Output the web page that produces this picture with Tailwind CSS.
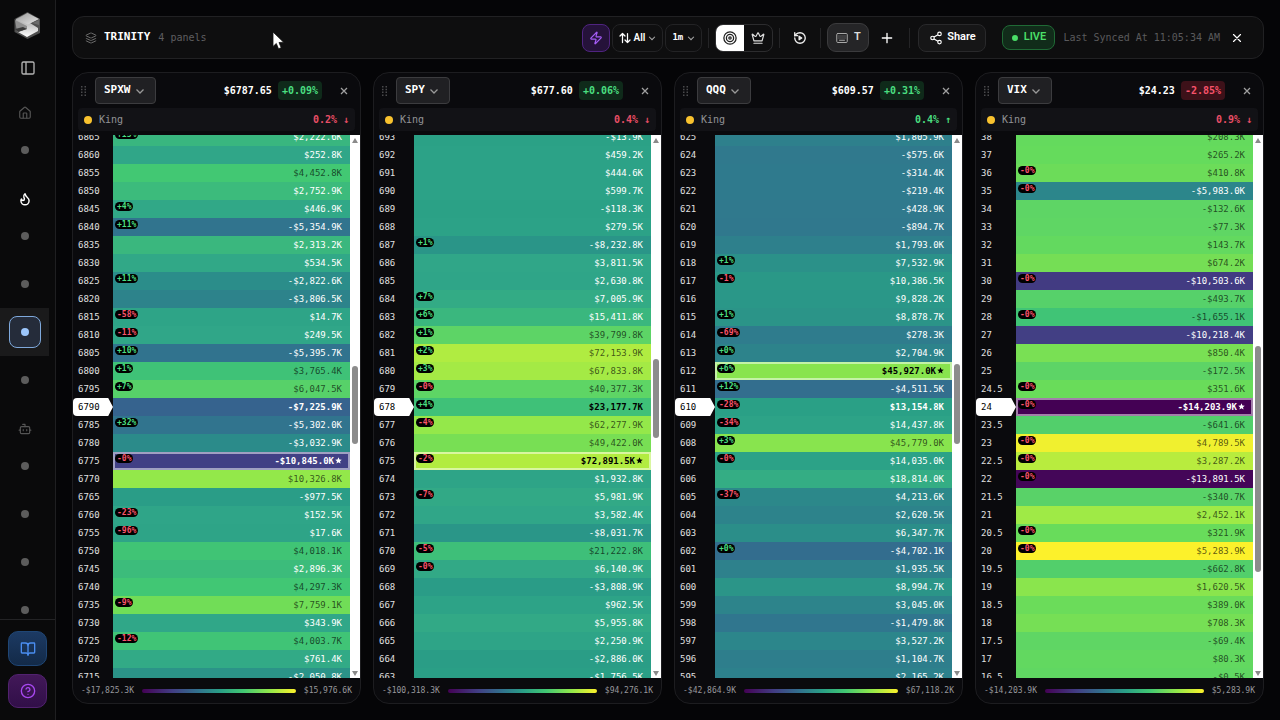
<!DOCTYPE html>
<html lang="en">
<head>
<meta charset="utf-8">
<meta name="viewport" content="width=device-width, initial-scale=1">
<title>Trinity</title>
<script src="https://cdn.jsdelivr.net/npm/@tailwindcss/browser@4"></script>
</head>
<body class="bg-[#050507] text-white font-['DejaVu_Sans_Mono','Liberation_Mono',monospace]">
<svg class="hidden" aria-hidden="true">
  <symbol id="chevron" viewBox="0 0 24 24"><path d="m5 9 7 7 7-7"/></symbol>
  <symbol id="close" viewBox="0 0 24 24"><path d="M18 6 6 18M6 6l12 12"/></symbol>
</svg>
<div class="flex h-screen overflow-hidden">

  <!-- Sidebar -->
  <aside class="flex w-14 shrink-0 flex-col border-r border-[#1f1f21] bg-[#0a0a0b]">
    <a href="#" aria-label="Home page" class="mt-2.5 flex h-8 items-center justify-center">
      <svg class="size-8" viewBox="0 0 32 32">
        <defs>
          <linearGradient id="lg1" x1="0" y1="0" x2="1" y2="1"><stop offset="0" stop-color="#9a9a9a"/><stop offset="1" stop-color="#e4e4e4"/></linearGradient>
          <linearGradient id="lg2" x1="0" y1="0" x2="0" y2="1"><stop offset="0" stop-color="#888"/><stop offset="1" stop-color="#fff"/></linearGradient>
        </defs>
        <path d="M15.500 2 28 9v14l-12.500 6L2.500 22V9z" fill="#4e4e4e"/>
        <path d="M15.500 3 26 9l-8 4 8 5v3l-11 6-9-5 9-3.500L4 13V9z" fill="url(#lg2)"/>
        <path d="M15.500 3 27 9l-11 5.500L4 10z" fill="url(#lg1)"/>
        <path d="M27 10v5l-7-2z" fill="#6a6a6a"/>
        <path d="M3 10l12 6v3L5 22z" fill="#8f8f8f"/>
        <path d="M3 19l8-2 4 2-9 3z" fill="#3a3a3a"/>
      </svg>
    </a>
    <button aria-label="Toggle sidebar" class="mt-4 flex h-5 items-center justify-center text-[#b4b4b4]">
      <svg class="size-4" viewBox="0 0 24 24" fill="none" stroke="currentColor" stroke-width="2"><rect x="3" y="3" width="18" height="18" rx="2"/><path d="M9 3v18"/></svg>
    </button>
    <nav class="mt-[22px] flex w-[49px] min-h-0 flex-1 flex-col overflow-hidden" aria-label="Main">
      <div class="flex h-[26px] shrink-0 items-center justify-center text-[#555]">
        <svg class="size-3.5" viewBox="0 0 24 24" fill="none" stroke="currentColor" stroke-width="2" stroke-linejoin="round"><path d="M15 21v-8a1 1 0 0 0-1-1h-4a1 1 0 0 0-1 1v8"/><path d="M3 10a2 2 0 0 1 .7-1.5l7-6a2 2 0 0 1 2.6 0l7 6A2 2 0 0 1 21 10v9a2 2 0 0 1-2 2H5a2 2 0 0 1-2-2z"/></svg>
      </div>
      <a href="#" aria-label="Overview" class="flex h-12 shrink-0 items-center justify-center"><span class="size-2 rounded-full bg-[#5c5c5c]"></span></a>
      <div class="mt-3 flex h-[26px] shrink-0 items-center justify-center text-white">
        <svg class="size-3.5" viewBox="0 0 24 24" fill="none" stroke="currentColor" stroke-width="2.5" stroke-linejoin="round" stroke-linecap="round"><path d="M8.5 14.5A2.5 2.5 0 0 0 11 12c0-1.38-.5-2-1-3-1.07-2.14-.22-4.05 2-6 .5 2.5 2 4.9 4 6.5s3 3.5 3 5.5a7 7 0 1 1-14 0c0-1.15.43-2.29 1-3a2.5 2.5 0 0 0 2.5 2.5z"/></svg>
      </div>
      <a href="#" aria-label="Heatmap" class="flex h-12 shrink-0 items-center justify-center"><span class="size-2 rounded-full bg-[#5c5c5c]"></span></a>
      <a href="#" aria-label="Charts" class="flex h-12 shrink-0 items-center justify-center"><span class="size-2 rounded-full bg-[#5c5c5c]"></span></a>
      <a href="#" aria-label="Trinity" aria-current="page" class="flex h-12 shrink-0 items-center justify-center bg-[#1a1a1b]"><span class="flex size-8 items-center justify-center rounded-lg border border-[#7fa9dc] bg-[#252c3a]"><span class="size-2 rounded-full bg-[#9cc6fb]"></span></span></a>
      <a href="#" aria-label="Replay" class="flex h-12 shrink-0 items-center justify-center"><span class="size-2 rounded-full bg-[#5c5c5c]"></span></a>
      <div class="mt-3 flex h-[26px] shrink-0 items-center justify-center text-[#555]">
        <svg class="size-3.5" viewBox="0 0 24 24" fill="none" stroke="currentColor" stroke-width="2" stroke-linejoin="round" stroke-linecap="round"><path d="M12 8V4H8"/><rect width="16" height="12" x="4" y="8" rx="2"/><path d="M2 14h2M20 14h2M15 13v2M9 13v2"/></svg>
      </div>
      <a href="#" aria-label="Assistant" class="flex h-12 shrink-0 items-center justify-center"><span class="size-2 rounded-full bg-[#5c5c5c]"></span></a>
      <a href="#" aria-label="Alerts" class="flex h-12 shrink-0 items-center justify-center"><span class="size-2 rounded-full bg-[#5c5c5c]"></span></a>
      <a href="#" aria-label="Signals" class="flex h-12 shrink-0 items-center justify-center"><span class="size-2 rounded-full bg-[#5c5c5c]"></span></a>
      <a href="#" aria-label="Settings" class="flex h-12 shrink-0 items-center justify-center"><span class="size-2 rounded-full bg-[#5c5c5c]"></span></a>
    </nav>
    <div class="flex flex-col gap-2 border-t border-[#232325] px-2 pt-[11px] pb-3">
      <button aria-label="Docs" class="flex h-[35px] items-center justify-center rounded-[10px] border border-[#1f4675] bg-linear-to-b from-[#1c3a63] to-[#132a48] text-[#4a8df0]">
        <svg class="size-4" viewBox="0 0 24 24" fill="none" stroke="currentColor" stroke-width="2" stroke-linejoin="round" stroke-linecap="round"><path d="M12 7v14"/><path d="M3 18a1 1 0 0 1-1-1V4a1 1 0 0 1 1-1h5a4 4 0 0 1 4 4 4 4 0 0 1 4-4h5a1 1 0 0 1 1 1v13a1 1 0 0 1-1 1h-6a3 3 0 0 0-3 3 3 3 0 0 0-3-3z"/></svg>
      </button>
      <button aria-label="Help" class="flex h-[34px] items-center justify-center rounded-[10px] border border-[#51226f] bg-linear-to-b from-[#421858] to-[#310f48] text-[#a848f0]">
        <svg class="size-4" viewBox="0 0 24 24" fill="none" stroke="currentColor" stroke-width="2" stroke-linejoin="round" stroke-linecap="round"><circle cx="12" cy="12" r="10"/><path d="M9.09 9a3 3 0 0 1 5.83 1c0 2-3 3-3 3M12 17h.01"/></svg>
      </button>
    </div>
  </aside>

  <main class="flex min-w-0 flex-1 flex-col gap-[13px] px-4 pt-4 pb-4">
    <!-- Toolbar -->
    <header class="flex h-[43px] shrink-0 items-center rounded-xl border border-[#212123] bg-[#0e0e0f] pl-3 pr-[19px]">
      <svg class="size-3 text-[#6b6b6b]" viewBox="0 0 24 24" fill="none" stroke="currentColor" stroke-width="2" stroke-linejoin="round"><path d="M12.83 2.18a2 2 0 0 0-1.66 0L2.6 6.08a1 1 0 0 0 0 1.83l8.58 3.91a2 2 0 0 0 1.66 0l8.58-3.9a1 1 0 0 0 0-1.83z"/><path d="M2 12a1 1 0 0 0 .58.91l8.6 3.91a2 2 0 0 0 1.65 0l8.58-3.9A1 1 0 0 0 22 12"/><path d="M2 17a1 1 0 0 0 .58.91l8.6 3.91a2 2 0 0 0 1.65 0l8.58-3.9A1 1 0 0 0 22 17"/></svg>
      <h1 class="ml-[7px] text-[11px] font-bold">TRINITY</h1>
      <span class="ml-2 text-[10px] text-[#5e5e60]">4 panels</span>
      <div class="ml-auto flex items-center">
        <button aria-label="Live flow" class="flex size-7 items-center justify-center rounded-lg border border-[#4f2480] bg-[#25123a] text-[#a45cf5]">
          <svg class="size-3.5" viewBox="0 0 24 24" fill="none" stroke="currentColor" stroke-width="2" stroke-linejoin="round" stroke-linecap="round"><path d="M4 14a1 1 0 0 1-.78-1.63l9.9-10.2a.5.5 0 0 1 .86.46l-1.92 6.02A1 1 0 0 0 13 10h7a1 1 0 0 1 .78 1.63l-9.9 10.2a.5.5 0 0 1-.86-.46l1.92-6.02A1 1 0 0 0 11 14z"/></svg>
        </button>
        <label class="relative ml-0.5 flex h-7 w-[51px] items-center rounded-lg border border-[#232325] bg-[#0f0f10] pl-1.5">
          <svg class="size-3 shrink-0" viewBox="0 0 24 24" fill="none" stroke="currentColor" stroke-width="2.5" stroke-linejoin="round" stroke-linecap="round"><path d="m2 8 5-5 5 5M7 3v18M22 16l-5 5-5-5M17 21V3"/></svg>
          <select aria-label="Sort" class="h-6 w-full appearance-none bg-transparent pl-0.5 font-['Roboto',sans-serif] text-[10px] font-semibold"><option>All</option></select>
          <svg class="pointer-events-none absolute right-[5px] size-2.5 text-[#aaa]" fill="none" stroke="currentColor" stroke-width="2.5"><use href="#chevron"/></svg>
        </label>
        <label class="relative ml-0.5 flex h-7 w-[37px] items-center rounded-lg border border-[#232325] bg-[#0f0f10]">
          <select aria-label="Interval" class="h-6 w-full appearance-none bg-transparent pl-1.5 text-[9px] font-bold"><option>1m</option></select>
          <svg class="pointer-events-none absolute right-[5px] size-2.5 text-[#aaa]" fill="none" stroke="currentColor" stroke-width="2.5"><use href="#chevron"/></svg>
        </label>
        <span class="ml-1.5 h-5 w-px bg-[#242426]"></span>
        <div class="ml-1.5 flex h-7 overflow-hidden rounded-lg border border-[#2c2c2e]">
          <button aria-label="Target mode" aria-pressed="true" class="flex w-7 items-center justify-center bg-white text-[#222]">
            <svg class="size-3.5" viewBox="0 0 24 24" fill="none" stroke="currentColor" stroke-width="2.2"><circle cx="12" cy="12" r="10.5"/><circle cx="12" cy="12" r="6.2"/><circle cx="12" cy="12" r="2"/></svg>
          </button>
          <button aria-label="King mode" aria-pressed="false" class="flex w-7 items-center justify-center text-[#ddd]">
            <svg class="size-3.5" viewBox="0 0 24 24" fill="none" stroke="currentColor" stroke-width="2" stroke-linejoin="round" stroke-linecap="round"><path d="M11.562 3.266a.5.5 0 0 1 .876 0L15.39 8.87a1 1 0 0 0 1.516.294L21.183 5.5a.5.5 0 0 1 .798.519l-2.834 10.246a1 1 0 0 1-.956.734H5.81a1 1 0 0 1-.957-.734L2.02 6.02a.5.5 0 0 1 .798-.519l4.276 3.664a1 1 0 0 0 1.516-.294zM5 21h14"/></svg>
          </button>
        </div>
        <span class="ml-1.5 h-5 w-px bg-[#242426]"></span>
        <button aria-label="Replay session" class="ml-1.5 flex size-7 items-center justify-center text-[#eee]">
          <svg class="size-3.5" viewBox="0 0 24 24" fill="none" stroke="currentColor" stroke-width="2.3" stroke-linejoin="round" stroke-linecap="round"><path d="M3 12a9 9 0 1 0 9-9 9.75 9.75 0 0 0-6.74 2.74L3 8"/><path d="M3 3v5h5"/><path d="M10.5 9v6l4.500-3z" fill="currentColor"/></svg>
        </button>
        <span class="ml-1.5 h-5 w-px bg-[#242426]"></span>
        <button class="ml-1.5 flex h-[29px] w-[42px] items-center justify-center gap-1.5 rounded-[9px] border border-[#3b3b3d] bg-[#252527] font-['Roboto',sans-serif] text-[11px] font-semibold text-[#ddd]">
          <svg class="size-3 text-[#a8a8a8]" viewBox="0 0 24 24" fill="none" stroke="currentColor" stroke-width="2" stroke-linecap="round"><rect x="1.500" y="3" width="21" height="18" rx="2"/><path d="M6 8h.01M10 8h.01M14 8h.01M18 8h.01M6 12h.01M10 12h.01M14 12h.01M18 12h.01M7 16.500h10"/></svg>
          T
        </button>
        <button aria-label="Add panel" class="ml-1 flex size-7 items-center justify-center">
          <svg class="size-3.5" viewBox="0 0 24 24" fill="none" stroke="currentColor" stroke-width="2.3" stroke-linecap="round"><path d="M4 12h16M12 4v16"/></svg>
        </button>
        <span class="ml-2 h-5 w-px bg-[#242426]"></span>
        <button class="ml-2 flex h-7 w-[68px] items-center justify-center gap-1 rounded-lg border border-[#29292b] bg-[#161617] font-['Roboto',sans-serif] text-[11px] font-semibold">
          <svg class="size-3.5" viewBox="0 0 24 24" fill="none" stroke="currentColor" stroke-width="2"><circle cx="18" cy="5" r="3"/><circle cx="6" cy="12" r="3"/><circle cx="18" cy="19" r="3"/><path d="m8.590 13.510 6.830 3.980M15.410 6.510l-6.820 3.980"/></svg>
          Share
        </button>
        <span class="ml-4 flex h-[25px] w-[53px] items-center justify-center gap-1.5 rounded-lg border border-[#1f6a35] bg-[#112c1a] font-['Roboto',sans-serif] text-[11px] font-semibold text-[#4ade68]"><span class="size-1.5 rounded-full bg-[#4ade68]"></span>LIVE</span>
        <span class="ml-2 text-[10px] text-[#5a5a5c]">Last Synced At 11:05:34 AM</span>
        <button aria-label="Close" class="ml-2.5 flex size-3.5 items-center justify-center">
          <svg class="size-3.5" fill="none" stroke="currentColor" stroke-width="2" stroke-linecap="round"><use href="#close"/></svg>
        </button>
      </div>
    </header>

    <!-- Panels, filled from the data below -->
    <div id="panels" class="grid min-h-0 flex-1 grid-cols-4 gap-3"></div>
  </main>
</div>

<svg class="pointer-events-none absolute top-[31px] left-[272px] h-[19px] w-[13px]" viewBox="0 0 13 19" aria-hidden="true"><path d="M1 1v14.500l3.300-3 2.200 5.300 2.700-1.100-2.200-5.200 4.600-.3z" fill="#fff" stroke="#111" stroke-width=".8"/></svg>

<script>
// Each row: strike|value in thousands|change in percent
const panels = [
  {sym:'SPXW', price:'$6787.65', chg:'+0.09%', king:'0.2%', up:false, spot:'6790', star:'6775', min:-17825.3, max:15976.6, thumb:[230,78],
   rows:'6865|2222.6|+15 6860|252.8 6855|4452.8 6850|2752.9 6845|446.9|+4 6840|-5354.9|+11 6835|2313.2 6830|534.5 6825|-2822.6|+11 6820|-3806.5 6815|14.7|-58 6810|249.5|-11 6805|-5395.7|+10 6800|3765.4|+1 6795|6047.5|+7 6790|-7225.9 6785|-5302.0|+32 6780|-3032.9 6775|-10845.0|-0 6770|10326.8 6765|-977.5 6760|152.5|-23 6755|17.6|-96 6750|4018.1 6745|2896.3 6740|4297.3 6735|7759.1|-9 6730|343.9 6725|4003.7|-12 6720|761.4 6715|-2050.8'},
  {sym:'SPY', price:'$677.60', chg:'+0.06%', king:'0.4%', up:false, spot:'678', star:'675', min:-100318.3, max:94276.1, thumb:[223,79],
   rows:'693|-13.9 692|459.2 691|444.6 690|599.7 689|-118.3 688|279.5 687|-8232.8|+1 686|3811.5 685|2630.8 684|7005.9|+7 683|15411.8|+6 682|39799.8|+1 681|72153.9|+2 680|67833.8|+3 679|40377.3|-0 678|23177.7|+4 677|62277.9|-4 676|49422.0 675|72891.5|-2 674|1932.8 673|5981.9|-7 672|3582.4 671|-8031.7 670|21222.8|-5 669|6140.9|-0 668|-3808.9 667|962.5 666|5955.8 665|2250.9 664|-2886.0 663|-1756.5'},
  {sym:'QQQ', price:'$609.57', chg:'+0.31%', king:'0.4%', up:true, spot:'610', star:'612', min:-42864.9, max:67118.2, thumb:[228,80],
   rows:'625|1805.9 624|-575.6 623|-314.4 622|-219.4 621|-428.9 620|-894.7 619|1793.0 618|7532.9|+1 617|10386.5|-1 616|9828.2 615|8878.7|+1 614|278.3|-69 613|2704.9|+0 612|45927.0|+6 611|-4511.5|+12 610|13154.8|-28 609|14437.8|-34 608|45779.0|+3 607|14035.0|-0 606|18814.0 605|4213.6|-37 604|2620.5 603|6347.7 602|-4702.1|+0 601|1935.5 600|8994.7 599|3045.0 598|-1479.8 597|3527.2 596|1104.7 595|2165.2'},
  {sym:'VIX', price:'$24.23', chg:'-2.85%', king:'0.9%', up:false, spot:'24', star:'24', min:-14203.9, max:5283.9, thumb:[210,226],
   rows:'38|208.3 37|265.2 36|410.8|-0 35|-5983.0|-0 34|-132.6 33|-77.3 32|143.7 31|674.2 30|-10503.6|-0 29|-493.7 28|-1655.1|-0 27|-10218.4 26|850.4 25|-172.5 24.5|351.6|-0 24|-14203.9|-0 23.5|-641.6 23|4789.5|-0 22.5|3287.2|-0 22|-13891.5|-0 21.5|-340.7 21|2452.1 20.5|321.9|-0 20|5283.9|-0 19.5|-662.8 19|1620.5 18.5|389.0 18|708.3 17.5|-69.4 17|80.3 16.5|-0.5'}
];
// Colour scale: position 0..1 and RGB
const stops = [[0,68,1,84],[.2,66,62,132],[.31,54,98,142],[.37,49,116,142],[.435,43,138,138],[.51,42,160,134],[.535,48,166,136],[.61,60,187,124],[.66,66,200,115],[.72,93,212,102],[.742,101,219,92],[.76,116,222,86],[.833,147,232,74],[.89,178,236,64],[.97,238,240,48],[1,252,241,43]];
const colour = t => {
  let i = 1;
  while (i < stops.length - 1 && t > stops[i][0]) i++;
  const a = stops[i-1], b = stops[i], k = (t - a[0]) / (b[0] - a[0]);
  return 'rgb(' + [1,2,3].map(n => Math.round(a[n] + (b[n] - a[n]) * k)).join(',') + ')';
};
const money = v => (v < 0 ? '-$' : '$') + Math.abs(v).toLocaleString('en-US', {minimumFractionDigits:1, maximumFractionDigits:1}) + 'K';

document.getElementById('panels').innerHTML = panels.map(p => {
  const rows = p.rows.split(' ').map(r => {
    const [strike, raw, pct] = r.split('|');
    const v = +raw, t = (v - p.min) / (p.max - p.min);
    const spot = strike === p.spot, star = strike === p.star, strong = spot || star;
    const tone = t > .62 ? (strong ? 'text-black' : 'text-black/65') : 'text-white';
    const weight = strong ? 'font-bold' : 'font-normal';
    const label = spot
      ? `<span class="flex h-[18px] items-center rounded-l bg-white pl-[5px] text-black [clip-path:polygon(0_0,88%_0,100%_50%,88%_100%,0_100%)]">${strike}</span>`
      : `<span class="block pl-[5px] text-[#e0e0e0]">${strike}</span>`;
    const badge = pct ? `<span class="absolute top-0.5 left-0.5 flex h-[9px] items-center rounded-full bg-black px-0.5 text-[8px] font-bold ${pct[0] === '+' ? 'text-[#4ade80]' : 'text-[#f8536b]'}">${pct}%</span>` : '';
    const ring = star ? '<span class="absolute inset-0 border-2 border-white/50"></span>' : '';
    return `<tr class="h-[18px]"><th scope="row" class="w-10 p-0 text-left text-[9px] leading-none font-medium">${label}</th><td class="relative p-0 pr-2 text-right text-[9px] leading-none ${weight} ${tone}" style="background:${colour(t)}">${ring}${badge}${money(v)}${star ? '<svg class="ml-px inline size-[7px] align-baseline" viewBox="0 0 24 24" fill="currentColor"><path d="M12 1l3.300 7.300 7.900.8-6 5.300 1.800 7.800L12 18.200l-7 4 1.800-7.800-6-5.300 7.900-.8z"/></svg>' : ''}</td></tr>`;
  }).join('');
  const down = p.chg[0] === '-';
  return `<section aria-label="${p.sym}" class="flex min-w-0 flex-col overflow-hidden rounded-2xl border border-[#1d1d20] bg-[#0a0a0d]">
    <div class="flex h-[35px] shrink-0 items-center pl-2 pr-2.5">
      <svg class="h-2.5 w-1.5 text-[#4a4a4d]" viewBox="0 0 6 10" fill="currentColor"><path d="M0 0h1.500v1.500H0zM3.500 0H5v1.500H3.500zM0 2.800h1.500v1.500H0zM3.500 2.800H5v1.500H3.500zM0 5.600h1.500v1.500H0zM3.500 5.600H5v1.500H3.500zM0 8.400h1.500v1.500H0zM3.500 8.400H5v1.500H3.500z"/></svg>
      <label class="relative ml-2 flex items-center">
        <select aria-label="Symbol" class="h-[27px] appearance-none rounded border border-[#3c3c3f] bg-[#202023] pl-2 pr-6 text-[11px] font-bold"><option>${p.sym}</option></select>
        <svg class="pointer-events-none absolute right-2.5 size-3 text-[#999]" fill="none" stroke="currentColor" stroke-width="2.5"><use href="#chevron"/></svg>
      </label>
      <span class="ml-auto text-[10px] font-bold">${p.price}</span>
      <span class="ml-1.5 flex h-[19px] items-center rounded px-1 text-[10px] font-bold ${down ? 'bg-[#3d1119] text-[#f8536b]' : 'bg-[#0f2a1a] text-[#4ade80]'}">${p.chg}</span>
      <button aria-label="Remove ${p.sym}" class="ml-4 flex size-3 items-center justify-center text-[#a0a0a0]"><svg class="size-3" fill="none" stroke="currentColor" stroke-width="2.5"><use href="#close"/></svg></button>
    </div>
    <div class="mx-[5px] mb-1 flex h-[23px] shrink-0 items-center rounded bg-[#121216] px-1.5 text-[10px]">
      <span class="size-2 rounded-full bg-[#f9c22e]"></span>
      <span class="ml-[7px] text-[#929296]">King</span>
      <span class="ml-auto font-bold ${p.up ? 'text-[#4ade80]' : 'text-[#e84e66]'}">${p.king} ${p.up ? '↑' : '↓'}</span>
    </div>
    <div class="flex min-h-0 flex-1">
      <div class="min-w-0 flex-1 overflow-hidden">
        <table class="-mt-[7px] w-full table-fixed border-collapse"><colgroup><col class="w-10"><col></colgroup><tbody>${rows}</tbody></table>
      </div>
      <div class="relative w-2.5 shrink-0 bg-white" aria-hidden="true">
        <svg class="absolute top-[3px] left-0.5 size-1.5" viewBox="0 0 6 6" fill="#8a8a8a"><path d="M3 0l3 5H0z"/></svg>
        <div class="absolute left-0.5 w-1.5 rounded-full bg-[#8c8c8c]" style="top:${(p.thumb[0] + 1) / 543 * 100}%;height:${p.thumb[1] / 543 * 100}%"></div>
        <svg class="absolute bottom-px left-0.5 size-1.5" viewBox="0 0 6 6" fill="#8a8a8a"><path d="M0 0h6L3 5z"/></svg>
      </div>
    </div>
    <div class="flex h-[25px] shrink-0 items-center gap-2 px-2 text-[8px] text-[#98989c]">
      <span>${money(p.min)}</span>
      <span class="h-1 flex-1 rounded-full bg-[linear-gradient(to_right,#440154,#423e84_20%,#31748e_37%,#2aa086_51%,#42c873_66%,#93e84a_83%,#fcf12b)]"></span>
      <span>${money(p.max)}</span>
    </div>
  </section>`;
}).join('');
</script>
</body>
</html>
